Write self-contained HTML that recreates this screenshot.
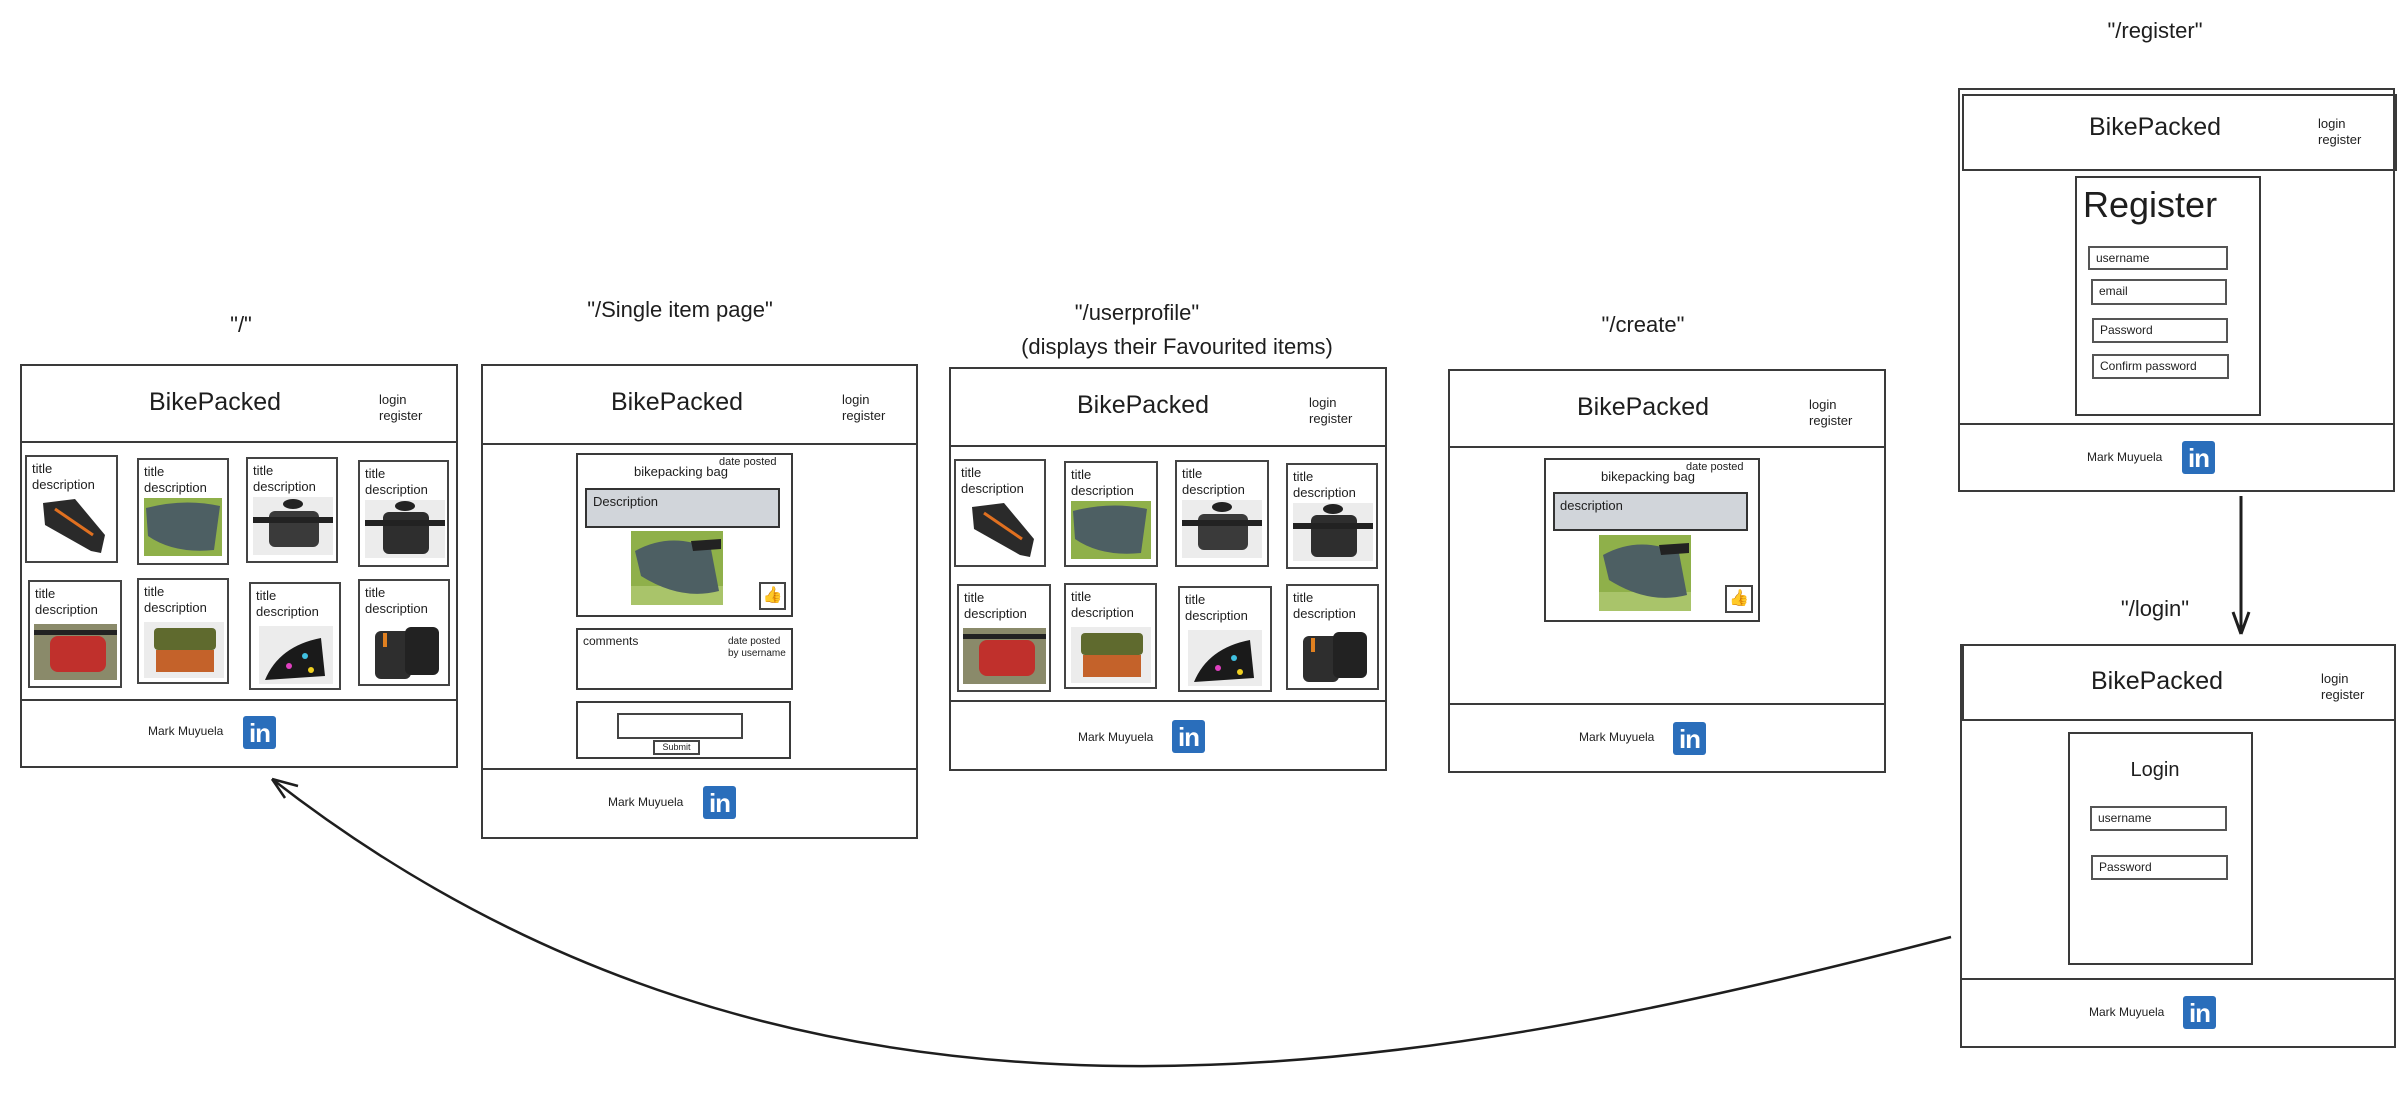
<!DOCTYPE html>
<html><head><meta charset="utf-8">
<style>
*{margin:0;padding:0;box-sizing:border-box}
body{width:2408px;height:1100px;background:#fff;position:relative;overflow:hidden;font-family:"Liberation Sans",sans-serif;color:#1e1e1e}
.a{position:absolute}
.bx{position:absolute;border:2px solid #3a3a3a}
.t{position:absolute;white-space:nowrap}
.title{font-size:25px;transform:translateX(-50%)}
.nav{font-size:13px;line-height:16px}
.lbl{font-size:22px;transform:translateX(-50%)}
.foot{font-size:12px}
.li{position:absolute;width:33px;height:33px;background:#2a6ebb;border-radius:3px;color:#fff;font:bold 26px/34px "Liberation Sans",sans-serif;text-align:center;letter-spacing:-1px}
.card{position:absolute;border:2px solid #444;background:#fff}
.card .ct{position:absolute;left:5px;top:4px;font-size:13px;line-height:16px}
.card svg{position:absolute;left:5px;top:38px}
.inp{position:absolute;border:2px solid #555;font:12px "Liberation Sans",sans-serif;padding:3px 6px}
</style></head><body>

<svg class="a" style="left:0;top:0" width="2408" height="1100">
<path d="M1951 937 C1400 1080, 800 1190, 272 779" fill="none" stroke="#1e1e1e" stroke-width="2.5"/>
<path d="M272 779 L298 786 M272 779 L285 798" stroke="#1e1e1e" stroke-width="2.5" fill="none"/>
<path d="M2241 496 L2241 632 M2241 634 L2233 612 M2241 634 L2249 612" stroke="#1e1e1e" stroke-width="3" fill="none"/>
</svg>

<div class="t lbl" style="left:241px;top:312px">"/"</div>
<div class="t lbl" style="left:680px;top:297px">"/Single item page"</div>
<div class="t lbl" style="left:1137px;top:300px">"/userprofile"</div>
<div class="t lbl" style="left:1177px;top:334px">(displays their Favourited items)</div>
<div class="t lbl" style="left:1643px;top:312px">"/create"</div>
<div class="t lbl" style="left:2155px;top:18px">"/register"</div>
<div class="t lbl" style="left:2155px;top:596px">"/login"</div>

<!-- BOX 1 -->
<div class="bx" style="left:20px;top:364px;width:438px;height:404px"></div>
<div class="bx" style="left:20px;top:364px;width:438px;height:79px"></div>
<div class="bx" style="left:20px;top:699px;width:438px;height:69px"></div>
<div class="t title" style="left:215px;top:388px">BikePacked</div>
<div class="t nav" style="left:379px;top:392px">login<br>register</div>
<div class="t foot" style="left:148px;top:724px">Mark Muyuela</div>
<div class="li" style="left:243px;top:716px">in</div>

<!-- BOX 2 -->
<div class="bx" style="left:481px;top:364px;width:437px;height:475px"></div>
<div class="bx" style="left:481px;top:364px;width:437px;height:81px"></div>
<div class="bx" style="left:481px;top:768px;width:437px;height:71px"></div>
<div class="t title" style="left:677px;top:388px">BikePacked</div>
<div class="t nav" style="left:842px;top:392px">login<br>register</div>
<div class="t foot" style="left:608px;top:795px">Mark Muyuela</div>
<div class="li" style="left:703px;top:786px">in</div>
<div class="bx" style="left:576px;top:453px;width:217px;height:164px"></div>
<div class="t" style="left:634px;top:464px;font-size:13px">bikepacking bag</div>
<div class="t" style="left:719px;top:456px;font-size:11px">date posted</div>
<div class="a" style="left:585px;top:488px;width:195px;height:40px;background:#d1d5da;border:2px solid #333"></div>
<div class="t" style="left:593px;top:494px;font-size:13px">Description</div>
<svg class="a" style="left:631px;top:531px" width="92" height="74"><rect width="92" height="74" fill="#8fb04a"/><rect y="55" width="92" height="19" fill="#a9c46a"/><path d="M4 20 Q40 0 80 18 L88 60 Q50 70 10 45Z" fill="#4d5f63"/><path d="M60 10 L90 8 L90 18 L62 20Z" fill="#222"/></svg>
<div class="a" style="left:759px;top:582px;width:27px;height:28px;border:2px solid #444;font-size:16px;text-align:center;line-height:24px;color:#f2b640">&#128077;</div>
<div class="bx" style="left:576px;top:628px;width:217px;height:62px"></div>
<div class="t" style="left:583px;top:634px;font-size:12px">comments</div>
<div class="t" style="left:728px;top:636px;font-size:10px;line-height:12px">date posted<br>by username</div>
<div class="bx" style="left:576px;top:701px;width:215px;height:58px"></div>
<div class="a" style="left:617px;top:713px;width:126px;height:26px;border:2px solid #444"></div>
<div class="a" style="left:653px;top:740px;width:47px;height:15px;border:2px solid #444;font-size:9px;text-align:center;line-height:11px">Submit</div>

<!-- BOX 3 -->
<div class="bx" style="left:949px;top:367px;width:438px;height:404px"></div>
<div class="bx" style="left:949px;top:367px;width:438px;height:80px"></div>
<div class="bx" style="left:949px;top:700px;width:438px;height:71px"></div>
<div class="t title" style="left:1143px;top:391px">BikePacked</div>
<div class="t nav" style="left:1309px;top:395px">login<br>register</div>
<div class="t foot" style="left:1078px;top:730px">Mark Muyuela</div>
<div class="li" style="left:1172px;top:720px">in</div>

<!-- BOX 4 -->
<div class="bx" style="left:1448px;top:369px;width:438px;height:404px"></div>
<div class="bx" style="left:1448px;top:369px;width:438px;height:79px"></div>
<div class="bx" style="left:1448px;top:703px;width:438px;height:70px"></div>
<div class="t title" style="left:1643px;top:393px">BikePacked</div>
<div class="t nav" style="left:1809px;top:397px">login<br>register</div>
<div class="t foot" style="left:1579px;top:730px">Mark Muyuela</div>
<div class="li" style="left:1673px;top:722px">in</div>
<div class="bx" style="left:1544px;top:458px;width:216px;height:164px"></div>
<div class="t" style="left:1601px;top:469px;font-size:13px">bikepacking bag</div>
<div class="t" style="left:1686px;top:461px;font-size:11px">date posted</div>
<div class="a" style="left:1553px;top:492px;width:195px;height:39px;background:#d1d5da;border:2px solid #333"></div>
<div class="t" style="left:1560px;top:498px;font-size:13px">description</div>
<svg class="a" style="left:1599px;top:535px" width="92" height="76"><rect width="92" height="76" fill="#8fb04a"/><rect y="57" width="92" height="19" fill="#a9c46a"/><path d="M4 20 Q40 0 80 18 L88 60 Q50 70 10 45Z" fill="#4d5f63"/><path d="M60 10 L90 8 L90 18 L62 20Z" fill="#222"/></svg>
<div class="a" style="left:1725px;top:585px;width:28px;height:28px;border:2px solid #444;font-size:16px;text-align:center;line-height:24px;color:#f2b640">&#128077;</div>

<!-- REGISTER -->
<div class="bx" style="left:1958px;top:88px;width:437px;height:404px"></div>
<div class="bx" style="left:1962px;top:94px;width:435px;height:77px"></div>
<div class="bx" style="left:1958px;top:423px;width:437px;height:69px"></div>
<div class="t title" style="left:2155px;top:113px">BikePacked</div>
<div class="t nav" style="left:2318px;top:116px">login<br>register</div>
<div class="t foot" style="left:2087px;top:450px">Mark Muyuela</div>
<div class="li" style="left:2182px;top:441px">in</div>
<div class="bx" style="left:2075px;top:176px;width:186px;height:240px"></div>
<div class="t" style="left:2083px;top:184px;font-size:36px">Register</div>
<div class="inp" style="left:2088px;top:246px;width:140px;height:24px">username</div>
<div class="inp" style="left:2091px;top:279px;width:136px;height:26px">email</div>
<div class="inp" style="left:2092px;top:318px;width:136px;height:25px">Password</div>
<div class="inp" style="left:2092px;top:354px;width:137px;height:25px">Confirm password</div>

<!-- LOGIN -->
<div class="bx" style="left:1960px;top:644px;width:436px;height:404px"></div>
<div class="bx" style="left:1962px;top:644px;width:434px;height:77px"></div>
<div class="bx" style="left:1960px;top:978px;width:436px;height:70px"></div>
<div class="t title" style="left:2157px;top:667px">BikePacked</div>
<div class="t nav" style="left:2321px;top:671px">login<br>register</div>
<div class="t foot" style="left:2089px;top:1005px">Mark Muyuela</div>
<div class="li" style="left:2183px;top:996px">in</div>
<div class="bx" style="left:2068px;top:732px;width:185px;height:233px"></div>
<div class="t" style="left:2155px;top:759px;font-size:20px;transform:translateX(-50%)">Login</div>
<div class="inp" style="left:2090px;top:806px;width:137px;height:25px">username</div>
<div class="inp" style="left:2091px;top:855px;width:137px;height:25px">Password</div>

<!-- cards box1 -->
<div class="card" style="left:25px;top:455px;width:93px;height:108px"><div class="ct">title<br>description</div>
<svg width="80" height="60" style="left:6px"><rect width="80" height="60" fill="#fff"/><path d="M10 8 L42 4 L72 40 L68 58 L58 56 L12 30Z" fill="#2a2a2a"/><path d="M22 14 L60 40" stroke="#e07020" stroke-width="3"/></svg></div>
<div class="card" style="left:137px;top:458px;width:92px;height:107px"><div class="ct">title<br>description</div>
<svg width="78" height="58"><rect width="78" height="58" fill="#8fb04a"/><path d="M2 10 Q40 0 76 8 L70 52 Q30 56 4 38Z" fill="#4d5f63"/></svg></div>
<div class="card" style="left:246px;top:457px;width:92px;height:106px"><div class="ct">title<br>description</div>
<svg width="80" height="58"><rect width="80" height="58" fill="#ececec"/><rect x="16" y="14" width="50" height="36" rx="6" fill="#3a3a3a"/><rect x="0" y="20" width="80" height="6" fill="#222"/><ellipse cx="40" cy="7" rx="10" ry="5" fill="#222"/></svg></div>
<div class="card" style="left:358px;top:460px;width:91px;height:107px"><div class="ct">title<br>description</div>
<svg width="80" height="58"><rect width="80" height="58" fill="#ececec"/><rect x="18" y="12" width="46" height="42" rx="6" fill="#2e2e2e"/><rect x="0" y="20" width="80" height="6" fill="#222"/><ellipse cx="40" cy="6" rx="10" ry="5" fill="#222"/></svg></div>
<div class="card" style="left:28px;top:580px;width:94px;height:108px"><div class="ct">title<br>description</div>
<svg width="83" height="56" style="left:4px;top:42px"><rect width="83" height="56" fill="#8a8a6a"/><rect x="16" y="12" width="56" height="36" rx="8" fill="#c0302c"/><rect x="0" y="6" width="83" height="5" fill="#222"/></svg></div>
<div class="card" style="left:137px;top:578px;width:92px;height:106px"><div class="ct">title<br>description</div>
<svg width="80" height="56" style="top:42px"><rect width="80" height="56" fill="#ececec"/><rect x="10" y="6" width="62" height="22" rx="4" fill="#5f6a2e"/><rect x="12" y="28" width="58" height="22" fill="#c4622a"/></svg></div>
<div class="card" style="left:249px;top:582px;width:92px;height:108px"><div class="ct">title<br>description</div>
<svg width="74" height="58" style="left:8px;top:42px"><rect width="74" height="58" fill="#ececec"/><path d="M6 54 Q20 20 62 12 L66 50Z" fill="#1a1a1a"/><circle cx="30" cy="40" r="3" fill="#e040c0"/><circle cx="46" cy="30" r="3" fill="#40c0e0"/><circle cx="52" cy="44" r="3" fill="#f0d020"/></svg></div>
<div class="card" style="left:358px;top:579px;width:92px;height:107px"><div class="ct">title<br>description</div>
<svg width="80" height="58" style="top:42px"><rect width="80" height="58" fill="#fff"/><rect x="10" y="8" width="36" height="48" rx="6" fill="#2e2e2e"/><rect x="40" y="4" width="34" height="48" rx="6" fill="#222"/><rect x="18" y="10" width="4" height="14" fill="#e08020"/></svg></div>

<!-- cards box3 -->
<div class="card" style="left:954px;top:459px;width:92px;height:108px"><div class="ct">title<br>description</div>
<svg width="80" height="60" style="left:6px"><rect width="80" height="60" fill="#fff"/><path d="M10 8 L42 4 L72 40 L68 58 L58 56 L12 30Z" fill="#2a2a2a"/><path d="M22 14 L60 40" stroke="#e07020" stroke-width="3"/></svg></div>
<div class="card" style="left:1064px;top:461px;width:94px;height:106px"><div class="ct">title<br>description</div>
<svg width="80" height="58"><rect width="80" height="58" fill="#8fb04a"/><path d="M2 10 Q40 0 76 8 L70 52 Q30 56 4 38Z" fill="#4d5f63"/></svg></div>
<div class="card" style="left:1175px;top:460px;width:94px;height:107px"><div class="ct">title<br>description</div>
<svg width="80" height="58"><rect width="80" height="58" fill="#ececec"/><rect x="16" y="14" width="50" height="36" rx="6" fill="#3a3a3a"/><rect x="0" y="20" width="80" height="6" fill="#222"/><ellipse cx="40" cy="7" rx="10" ry="5" fill="#222"/></svg></div>
<div class="card" style="left:1286px;top:463px;width:92px;height:106px"><div class="ct">title<br>description</div>
<svg width="80" height="58"><rect width="80" height="58" fill="#ececec"/><rect x="18" y="12" width="46" height="42" rx="6" fill="#2e2e2e"/><rect x="0" y="20" width="80" height="6" fill="#222"/><ellipse cx="40" cy="6" rx="10" ry="5" fill="#222"/></svg></div>
<div class="card" style="left:957px;top:584px;width:94px;height:108px"><div class="ct">title<br>description</div>
<svg width="83" height="56" style="left:4px;top:42px"><rect width="83" height="56" fill="#8a8a6a"/><rect x="16" y="12" width="56" height="36" rx="8" fill="#c0302c"/><rect x="0" y="6" width="83" height="5" fill="#222"/></svg></div>
<div class="card" style="left:1064px;top:583px;width:93px;height:106px"><div class="ct">title<br>description</div>
<svg width="80" height="56" style="top:42px"><rect width="80" height="56" fill="#ececec"/><rect x="10" y="6" width="62" height="22" rx="4" fill="#5f6a2e"/><rect x="12" y="28" width="58" height="22" fill="#c4622a"/></svg></div>
<div class="card" style="left:1178px;top:586px;width:94px;height:106px"><div class="ct">title<br>description</div>
<svg width="74" height="56" style="left:8px;top:42px"><rect width="74" height="56" fill="#ececec"/><path d="M6 52 Q20 18 62 10 L66 48Z" fill="#1a1a1a"/><circle cx="30" cy="38" r="3" fill="#e040c0"/><circle cx="46" cy="28" r="3" fill="#40c0e0"/><circle cx="52" cy="42" r="3" fill="#f0d020"/></svg></div>
<div class="card" style="left:1286px;top:584px;width:93px;height:106px"><div class="ct">title<br>description</div>
<svg width="80" height="56" style="top:42px"><rect width="80" height="56" fill="#fff"/><rect x="10" y="8" width="36" height="46" rx="6" fill="#2e2e2e"/><rect x="40" y="4" width="34" height="46" rx="6" fill="#222"/><rect x="18" y="10" width="4" height="14" fill="#e08020"/></svg></div>

</body></html>
